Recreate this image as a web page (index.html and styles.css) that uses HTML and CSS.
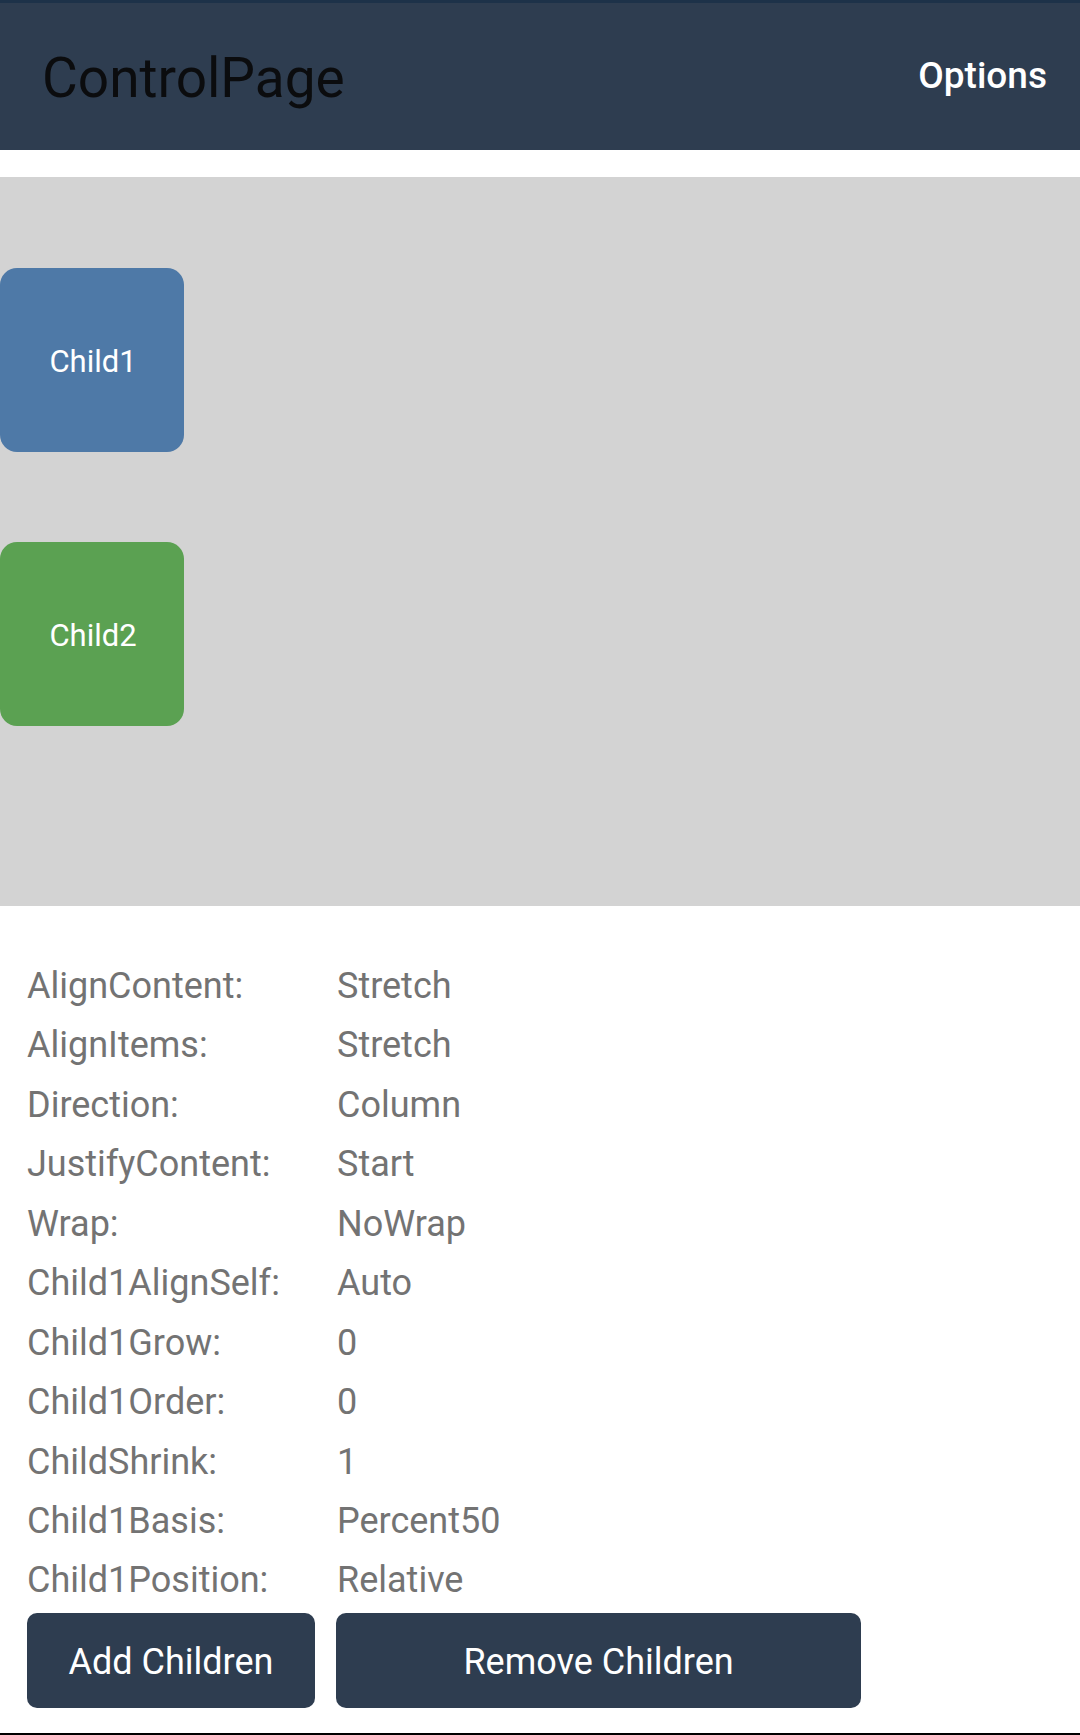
FILE: index.html
```html
<!DOCTYPE html>
<html>
<head>
<meta charset="utf-8">
<link rel="stylesheet" href="styles.css">
</head>
<body>
<div class="status"></div>
<header class="appbar">
  <div class="title">ControlPage</div>
  <div class="options">Options</div>
</header>
<div class="spacer"></div>
<section class="flex-area">
  <div class="child child-blue">Child1</div>
  <div class="child child-green">Child2</div>
</section>
<section class="props">
  <div class="row"><span class="label">AlignContent:</span><span class="value">Stretch</span></div>
  <div class="row"><span class="label">AlignItems:</span><span class="value">Stretch</span></div>
  <div class="row"><span class="label">Direction:</span><span class="value">Column</span></div>
  <div class="row"><span class="label">JustifyContent:</span><span class="value">Start</span></div>
  <div class="row"><span class="label">Wrap:</span><span class="value">NoWrap</span></div>
  <div class="row"><span class="label">Child1AlignSelf:</span><span class="value">Auto</span></div>
  <div class="row"><span class="label">Child1Grow:</span><span class="value">0</span></div>
  <div class="row"><span class="label">Child1Order:</span><span class="value">0</span></div>
  <div class="row"><span class="label">ChildShrink:</span><span class="value">1</span></div>
  <div class="row"><span class="label">Child1Basis:</span><span class="value">Percent50</span></div>
  <div class="row"><span class="label">Child1Position:</span><span class="value">Relative</span></div>
</section>
<div class="buttons">
  <button class="btn btn-add">Add Children</button>
  <button class="btn btn-remove">Remove Children</button>
</div>
<div class="bottom-line"></div>
</body>
</html>
```
FILE: styles.css
```css
html, body {
  margin: 0;
  padding: 0;
}
body {
  width: 1080px;
  height: 1735px;
  background: #ffffff;
  font-family: Roboto, "Liberation Sans", sans-serif;
  display: flex;
  flex-direction: column;
  overflow: hidden;
}
.status {
  height: 3px;
  background: #1d3249;
}
.appbar {
  height: 147px;
  background: #2e3d50;
  display: flex;
  align-items: center;
  justify-content: space-between;
  padding: 0 33px 0 42px;
}
.title {
  font-size: 55px;
  color: #0b0c0e;
  padding-top: 2px;
}
.options {
  font-size: 37px;
  font-weight: 500;
  color: #ffffff;
  padding-bottom: 2px;
}
.spacer {
  height: 27px;
}
.flex-area {
  height: 729px;
  box-sizing: border-box;
  background: #d3d3d3;
  padding-top: 91px;
  display: flex;
  flex-direction: column;
  gap: 90px;
}
.child {
  width: 184px;
  height: 184px;
  border-radius: 17px;
  display: flex;
  align-items: center;
  justify-content: center;
  color: #ffffff;
  font-size: 31px;
  padding: 3px 0 0 2px;
  box-sizing: border-box;
}
.child-blue {
  background: #4e79a7;
}
.child-green {
  background: #5ba152;
}
.props {
  padding: 51px 0 0 27px;
  display: flex;
  flex-direction: column;
}
.row {
  display: flex;
  height: 59.45px;
  line-height: 59.45px;
  font-size: 36px;
  color: #737373;
}
.label {
  width: 310px;
}
.buttons {
  display: flex;
  gap: 21px;
  padding: 2px 0 0 27px;
}
.btn {
  height: 95px;
  border: none;
  border-radius: 10px;
  background: #2e3d50;
  color: #ffffff;
  font-family: Roboto, "Liberation Sans", sans-serif;
  font-size: 36px;
  padding: 4px 0 0 0;
}
.btn-add {
  width: 288px;
}
.btn-remove {
  width: 525px;
}
.bottom-line {
  margin-top: auto;
  height: 2px;
  background: #000000;
}
```
